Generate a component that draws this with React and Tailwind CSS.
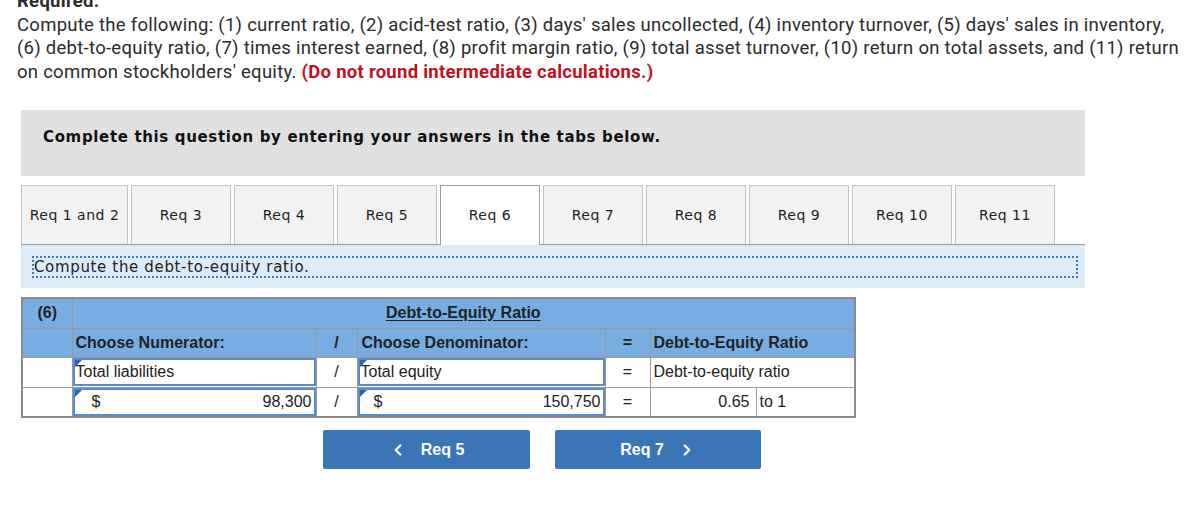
import { ChevronLeft, ChevronRight } from 'lucide-react'

const TABS = ['Req 1 and 2', 'Req 3', 'Req 4', 'Req 5', 'Req 6', 'Req 7', 'Req 8', 'Req 9', 'Req 10', 'Req 11']

function Corner() {
  return (
    <svg className="absolute left-0 top-0" width="7" height="7" viewBox="0 0 7 7">
      <polygon points="0,0 7,0 0,7" fill="#2f64ad" />
    </svg>
  )
}

function Field({ children, className = '' }) {
  return (
    <div className={`relative h-[28px] border-2 border-[#5a8bca] bg-white flex items-center ${className}`}>
      <Corner />
      {children}
    </div>
  )
}

export default function App() {
  return (
    <div className="bg-white min-h-[522px] text-[#222]">
      {/* ── Question text ── */}
      <div className="mt-[-10px] pl-[17px] pr-[2px] text-[18.5px] leading-[23.5px] tracking-[0.27px] font-['Roboto',sans-serif] text-[#2b2b2b] whitespace-nowrap">
        <div className="font-bold">Required:</div>
        <p>
          Compute the following: (1) current ratio, (2) acid-test ratio, (3) days' sales uncollected, (4) inventory turnover, (5) days' sales in inventory,<br />
          (6) debt-to-equity ratio, (7) times interest earned, (8) profit margin ratio, (9) total asset turnover, (10) return on total assets, and (11) return<br />
          on common stockholders' equity. <span className="font-bold text-[#c0121c]">(Do not round intermediate calculations.)</span>
        </p>
      </div>

      <div className="ml-[21px] w-[1064px] mt-[26px]">
        {/* ── Instruction bar ── */}
        <div className="h-[66px] bg-[#e0e0e0] pl-[22px] pt-[17px] font-['DejaVu_Sans',sans-serif] font-bold text-[15px] tracking-[0.65px] leading-[20px] text-[#111]">
          Complete this question by entering your answers in the tabs below.
        </div>

        {/* ── Tabs ── */}
        <div className="mt-[9px] flex gap-[3px] border-b border-[#9a9a9a] font-['DejaVu_Sans',sans-serif] text-[14px] tracking-[0.5px]">
          {TABS.map((t, i) => (
            <div
              key={t}
              className={`h-[59px] flex items-center justify-center ${i === 0 ? 'w-[107px]' : 'w-[100px]'} ${
                i === 4
                  ? 'bg-white border border-b-0 border-[#9a9a9a] mb-[-1px] h-[60px]'
                  : 'bg-[#f2f2f2] border border-b-0 border-[#c4c4c4]'
              }`}
            >
              {t}
            </div>
          ))}
        </div>

        <div className="h-[43px] bg-[#dbebf8] pl-[11px] pr-[7px] pt-[11px]">
          <div className="h-[22px] border-2 border-dotted border-[#3d79c2] flex items-center font-['DejaVu_Sans',sans-serif] text-[15px] tracking-[0.65px] text-[#222]">
            Compute the debt-to-equity ratio.
          </div>
        </div>

        {/* ── Ratio table ── */}
        <table className="mt-[9px] w-[833px] border-collapse border-2 border-[#8c8c8c] font-['Liberation_Sans',Arial,sans-serif] text-[16px] text-[#222] table-fixed">
          <colgroup>
            <col className="w-[50px]" />
            <col className="w-[244px]" />
            <col className="w-[41px]" />
            <col className="w-[248px]" />
            <col className="w-[45px]" />
            <col className="w-[106px]" />
            <col className="w-[99px]" />
          </colgroup>
          <tbody>
            <tr className="h-[30px] bg-[#78ade4] font-bold">
              <td className="border border-[#9a9a9a] text-center">(6)</td>
              <td colSpan={6} className="border border-[#9a9a9a] text-center underline underline-offset-2">
                Debt-to-Equity Ratio
              </td>
            </tr>
            <tr className="h-[29px] bg-[#78ade4] font-bold">
              <td className="border border-[#9a9a9a]" />
              <td className="border border-[#9a9a9a] pl-[3px]">Choose Numerator:</td>
              <td className="border border-[#9a9a9a] text-center">/</td>
              <td className="border border-[#9a9a9a] pl-[4px]">Choose Denominator:</td>
              <td className="border border-[#9a9a9a] text-center">=</td>
              <td colSpan={2} className="border border-[#9a9a9a] pl-[3px]">Debt-to-Equity Ratio</td>
            </tr>
            <tr className="h-[30px]">
              <td className="border border-[#9a9a9a]" />
              <td className="border border-[#9a9a9a] p-0">
                <Field className="pl-[1px]">Total liabilities</Field>
              </td>
              <td className="border border-[#9a9a9a] text-center">/</td>
              <td className="border border-[#9a9a9a] p-0">
                <Field className="pl-[1px]">Total equity</Field>
              </td>
              <td className="border border-[#9a9a9a] text-center">=</td>
              <td colSpan={2} className="border border-[#9a9a9a] pl-[3px]">Debt-to-equity ratio</td>
            </tr>
            <tr className="h-[30px]">
              <td className="border border-[#9a9a9a]" />
              <td className="border border-[#9a9a9a] p-0">
                <Field className="justify-between pl-[17px] pr-[2px]">
                  <span>$</span>
                  <span>98,300</span>
                </Field>
              </td>
              <td className="border border-[#9a9a9a] text-center">/</td>
              <td className="border border-[#9a9a9a] p-0">
                <Field className="justify-between pl-[14px] pr-[2px]">
                  <span>$</span>
                  <span>150,750</span>
                </Field>
              </td>
              <td className="border border-[#9a9a9a] text-center">=</td>
              <td className="border border-[#9a9a9a] text-right pr-[6px]">0.65</td>
              <td className="border border-[#9a9a9a] pl-[3px]">to 1</td>
            </tr>
          </tbody>
        </table>

        {/* ── Prev / next ── */}
        <div className="mt-[12px] ml-[302px] flex gap-[25px] font-['Liberation_Sans',Arial,sans-serif] font-bold text-[16px] text-white">
          <button className="w-[207px] h-[39px] rounded-[2px] bg-[#3a75b8] flex items-center justify-center gap-[14px]">
            <ChevronLeft size={18} strokeWidth={3} />
            <span>Req 5</span>
          </button>
          <button className="w-[206px] h-[39px] rounded-[2px] bg-[#3a75b8] flex items-center justify-center gap-[14px]">
            <span>Req 7</span>
            <ChevronRight size={18} strokeWidth={3} />
          </button>
        </div>
      </div>
    </div>
  )
}
